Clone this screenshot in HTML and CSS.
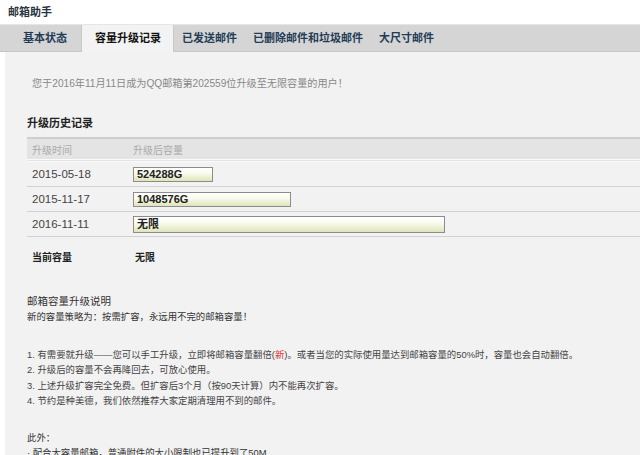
FILE: index.html
```html
<!DOCTYPE html>
<html lang="zh-CN">
<head>
<meta charset="UTF-8">
<title>邮箱助手</title>
<link rel="stylesheet" href="styles.css">
</head>
<body>
    <div class="title">邮箱助手</div>
    <div class="tabs">
        <div class="tab first">基本状态</div>
        <div class="tab active">容量升级记录</div>
        <div class="tab">已发送邮件</div>
        <div class="tab">已删除邮件和垃圾邮件</div>
        <div class="tab">大尺寸邮件</div>
    </div>

    <div class="content">
        <div class="notice">您于2016年11月11日成为QQ邮箱第202559位升级至无限容量的用户！</div>

        <div class="heading">升级历史记录</div>
        <table class="history">
            <tr class="head"><td class="c-date">升级时间</td><td>升级后容量</td></tr>
            <tr><td class="c-date">2015-05-18</td><td><div class="bar" style="width:80px">524288G</div></td></tr>
            <tr><td class="c-date">2015-11-17</td><td><div class="bar" style="width:158px">1048576G</div></td></tr>
            <tr><td class="c-date">2016-11-11</td><td><div class="bar tall" style="width:312px">无限</div></td></tr>
        </table>
        <div class="current"><span class="c-label">当前容量</span><span>无限</span></div>

        <div class="explain">
            <div class="explain-title">邮箱容量升级说明</div>
            <div>新的容量策略为：按需扩容，永远用不完的邮箱容量！</div>
        </div>

        <ol class="rules">
            <li>1. 有需要就升级——您可以手工升级，立即将邮箱容量翻倍(<span class="red">新</span>)。或者当您的实际使用量达到邮箱容量的50%时，容量也会自动翻倍。</li>
            <li>2. 升级后的容量不会再降回去，可放心使用。</li>
            <li>3. 上述升级扩容完全免费。但扩容后3个月（按90天计算）内不能再次扩容。</li>
            <li>4. 节约是种美德，我们依然推荐大家定期清理用不到的邮件。</li>
        </ol>

        <div class="extra">此外：</div>
        <div class="extra">· 配合大容量邮箱，普通附件的大小限制也已提升到了50M</div>
    </div>
</body>
</html>
```

FILE: styles.css
```css
body {
    margin: 0;
    padding: 0;
    background: #fff;
    font-family: "Liberation Sans", "Noto Sans CJK SC", sans-serif;
    font-size: 11px;
    color: #333;
    overflow: hidden;
}

.title {
    height: 24px;
    line-height: 24px;
    padding-left: 8px;
    font-weight: bold;
    color: #2a3440;
}

.tabs {
    display: flex;
    height: 26px;
    padding-left: 8px;
    background: #d5d5d5;
    border-top: 1px solid #e6e6e6;
    border-bottom: 1px solid #c4c4c4;
}

.tab {
    padding: 0 8px;
    line-height: 26px;
    font-weight: bold;
    color: #233c55;
}

.tab.first {
    padding: 0 14px 0 15px;
}

.tab.active {
    background: #f3f3f3;
    color: #111;
    margin-bottom: -1px;
    padding: 0 12px 0 13px;
    border-left: 1px solid #c8c8c8;
    border-right: 1px solid #c8c8c8;
}

.content {
    margin-left: 5px;
    padding: 24px 0 0 22px;
    background: #f2f2f2;
    height: 420px;
}

.notice {
    padding-left: 5px;
    font-size: 10.15px;
    color: #888;
    line-height: 16px;
}

.heading {
    margin-top: 23px;
    font-weight: bold;
    color: #222;
    line-height: 16px;
}

.history {
    margin-top: 6px;
    width: 100%;
    border-collapse: collapse;
    border-top: 2px solid #cfcfcf;
}

.history td {
    padding: 0;
    height: 24px;
    border-bottom: 1px solid #d2d2d2;
    color: #444;
}

.history .head td {
    height: 20px;
    font-size: 10px;
    background: #e4e4e4;
    color: #aaa;
    border-bottom: 3px double #fafafa;
}

.history td.c-date {
    width: 101px;
    padding-left: 5px;
    font-size: 11.5px;
}

.history .head td.c-date {
    font-size: 10px;
}

.bar {
    box-sizing: border-box;
    height: 15px;
    line-height: 13px;
    padding-left: 3px;
    border: 1px solid #8c8c8c;
    background: linear-gradient(#ffffff, #fafbf0 40%, #dfe4b8);
    font-weight: bold;
    color: #222;
}

.bar.tall {
    height: 17px;
    line-height: 15px;
}

.current {
    display: flex;
    margin-top: 12px;
    padding-left: 5px;
    font-size: 10px;
    font-weight: bold;
    color: #222;
}

.c-label {
    width: 103px;
}

.explain {
    margin-top: 29px;
    font-size: 9.4px;
    line-height: 16px;
    color: #333;
}

.explain-title {
    font-size: 10.5px;
}

.rules {
    list-style: none;
    margin: 22px 0 0 0;
    padding: 0;
    font-size: 9.4px;
    line-height: 15.3px;
    color: #444;
}

.red {
    color: #d33;
}

.extra {
    margin-top: 0;
    font-size: 9.4px;
    line-height: 15px;
}

.rules + .extra {
    margin-top: 22px;
}
```
